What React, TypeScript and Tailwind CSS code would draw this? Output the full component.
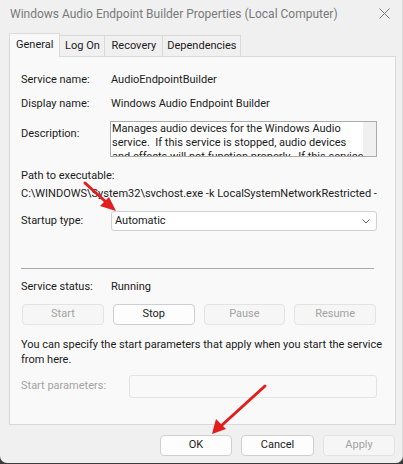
import React from 'react';

const font = { fontFamily: 'Roboto, "Noto Sans", sans-serif' };

function Btn({ label, disabled, className = '' }: { label: string; disabled?: boolean; className?: string }) {
  return (
    <div
      className={
        'flex h-[21px] items-center justify-center rounded-[4px] border text-[11px] ' +
        (disabled
          ? 'border-[#e3e3e3] bg-[#f6f6f6] text-[#a3a3a3] '
          : 'border-[#cfcfcf] bg-[#fdfdfd] text-[#1b1b1b] ') +
        className
      }
    >
      {label}
    </div>
  );
}

function Tab({ label, active, className = '' }: { label: string; active?: boolean; className?: string }) {
  return active ? (
    <div className="relative z-10 -mb-px flex h-[24px] items-center border border-b-0 border-[#d9d9d9] bg-[#f9f9f9] px-[6px] text-[#1b1b1b]">
      {label}
    </div>
  ) : (
    <div className={'flex h-[21px] items-center justify-center border border-l-0 border-b-0 border-[#d9d9d9] bg-[#f0f0f0] text-[#1b1b1b] ' + className}>
      {label}
    </div>
  );
}

export default function App() {
  return (
    <div className="h-[464px] w-[403px] bg-[#3b3b3b]" style={font}>
      <div className="relative flex h-[463px] w-[403px] flex-col overflow-hidden rounded-b-[7px] border-r border-[#dadada] bg-[#f0f0f0] text-[11px] text-[#1b1b1b]">
        {/* title bar */}
        <div className="flex h-[27px] items-center justify-between pl-[10px] pr-[10px]">
          <span className="text-[12px] text-[#7a7a7a]">Windows Audio Endpoint Builder Properties (Local Computer)</span>
          <svg width="11" height="11" viewBox="0 0 11 11" className="mr-[2px]">
            <path d="M0.5 0.5 L10.5 10.5 M10.5 0.5 L0.5 10.5" stroke="#7a7a7a" strokeWidth="1" />
          </svg>
        </div>

        {/* tabs */}
        <div className="mt-[6px] flex items-end pl-[9px]">
          <Tab label="General" active />
          <Tab label="Log On" className="w-[45px]" />
          <Tab label="Recovery" className="w-[58px]" />
          <Tab label="Dependencies" className="w-[78px]" />
        </div>

        {/* panel */}
        <div className="ml-[9px] flex h-[369px] w-[387px] flex-col border border-[#d9d9d9] bg-[#f9f9f9] pl-[11px]">
          <div className="mt-[15px] flex h-[16px] items-center">
            <span className="w-[90px]">Service name:</span>
            <span>AudioEndpointBuilder</span>
          </div>
          <div className="mt-[8px] flex h-[16px] items-center">
            <span className="w-[90px]">Display name:</span>
            <span>Windows Audio Endpoint Builder</span>
          </div>
          <div className="mt-[9px] flex">
            <span className="mt-[5px] w-[89px]">Description:</span>
            <div className="flex h-[36px] w-[267px] overflow-hidden border border-[#ababab] bg-white">
              <div className="flex-1 whitespace-nowrap pl-px leading-[14px]">
                Manages audio devices for the Windows Audio
                <br />
                service.&nbsp; If this service is stopped, audio devices
                <br />
                and effects will not function properly.&nbsp; If this service
              </div>
              <div className="w-[15px] shrink-0 bg-[#f0f0f0]" />
            </div>
          </div>
          <div className="mt-[11px] h-[16px] leading-[16px]">Path to executable:</div>
          <div className="mt-[2px] h-[16px] w-[356px] overflow-hidden whitespace-nowrap leading-[16px]">
            C:\WINDOWS\System32\svchost.exe -k LocalSystemNetworkRestricted -p
          </div>
          <div className="mt-[9px] flex items-center">
            <span className="w-[90px]">Startup type:</span>
            <div className="flex h-[20px] w-[266px] items-center justify-between rounded-[3px] border border-[#d0d0d0] bg-white pl-[3px] pr-[6px]">
              <span>Automatic</span>
              <svg width="8" height="5" viewBox="0 0 8 5">
                <path d="M0.5 0.5 L4 4 L7.5 0.5" fill="none" stroke="#555" strokeWidth="0.9" />
              </svg>
            </div>
          </div>
          <div className="mt-[37px] h-px w-[353px] bg-[#a9a9a9]" />
          <div className="mt-[10px] flex h-[16px] items-center">
            <span className="w-[90px]">Service status:</span>
            <span>Running</span>
          </div>
          <div className="mt-[9px] grid w-[355px] grid-cols-4 gap-[9px] pl-px">
            <Btn label="Start" disabled />
            <Btn label="Stop" />
            <Btn label="Pause" disabled />
            <Btn label="Resume" disabled />
          </div>
          <div className="mt-[12px] whitespace-nowrap leading-[15px]">
            You can specify the start parameters that apply when you start the service
            <br />
            from here.
          </div>
          <div className="mt-[8px] flex items-center">
            <span className="w-[108px] text-[#a3a3a3]">Start parameters:</span>
            <div className="h-[23px] w-[248px] rounded-[3px] border border-[#e3e3e3] bg-[#f9f9f9]" />
          </div>
        </div>

        {/* bottom buttons */}
        <div className="mt-[10px] flex justify-end gap-[9px] pr-[7px]">
          <Btn label="OK" className="w-[72px]" />
          <Btn label="Cancel" className="w-[73px]" />
          <Btn label="Apply" disabled className="w-[72px]" />
        </div>

        {/* red annotation arrows */}
        <svg className="pointer-events-none absolute left-0 top-0" width="403" height="464">
          <line x1="85" y1="183" x2="106" y2="202" stroke="#e21d1d" strokeWidth="3" strokeLinecap="round" />
          <polygon points="116,211 100,206 109,197" fill="#e21d1d" />
          <line x1="265" y1="386" x2="221" y2="426" stroke="#e21d1d" strokeWidth="3" strokeLinecap="round" />
          <polygon points="212,434 216,419 226,429" fill="#e21d1d" />
        </svg>
      </div>
    </div>
  );
}
